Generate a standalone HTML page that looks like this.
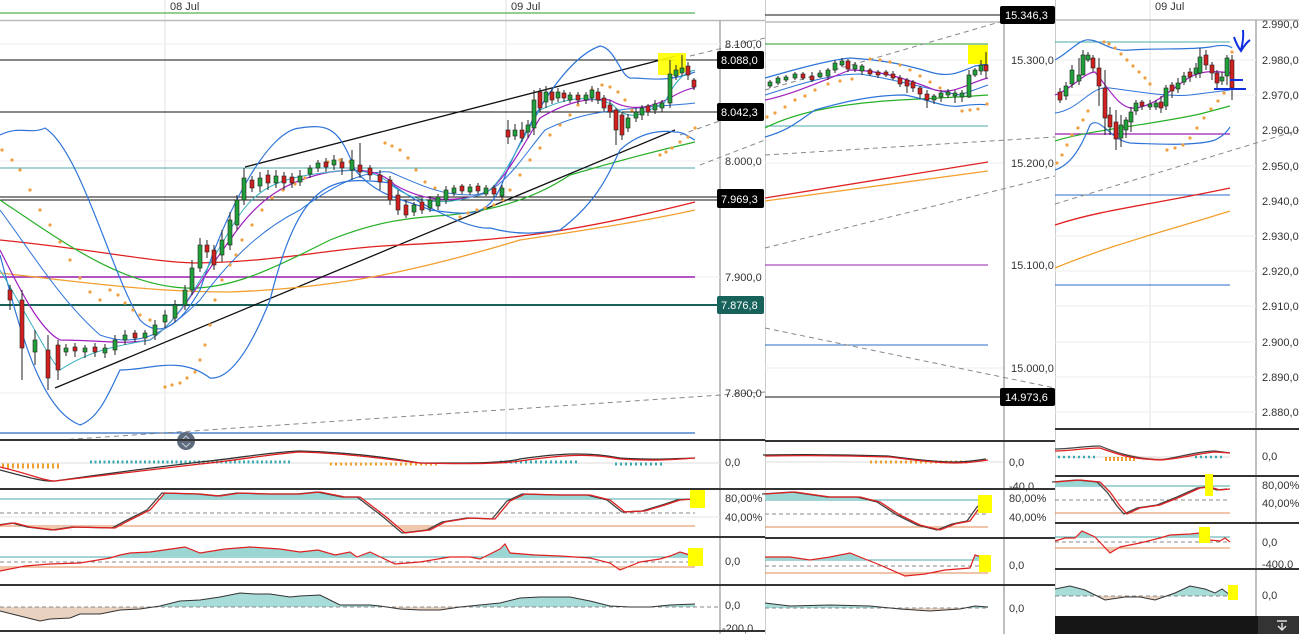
<!DOCTYPE html>
<html><head><meta charset="utf-8"><style>
html,body{margin:0;padding:0;background:#fff;width:1299px;height:634px;overflow:hidden}
svg{display:block}
text{font-family:"Liberation Sans",sans-serif;font-size:11px;fill:#333}
.b{fill:#fff;font-size:11px}
</style></head><body>
<svg width="1299" height="634" viewBox="0 0 1299 634">
<defs>
<clipPath id="c1t"><rect x="0" y="489" width="700" height="10"/></clipPath>
<clipPath id="c1b"><rect x="0" y="526" width="700" height="11"/></clipPath>
<clipPath id="c1ct"><rect x="0" y="537" width="700" height="20"/></clipPath>
<clipPath id="c1cb"><rect x="0" y="567" width="700" height="18"/></clipPath>
<clipPath id="c1mt"><rect x="0" y="585" width="700" height="22"/></clipPath>
<clipPath id="c1mb"><rect x="0" y="607" width="700" height="24"/></clipPath>
<clipPath id="c2t"><rect x="765" y="489" width="230" height="11"/></clipPath>
<clipPath id="c2b"><rect x="765" y="527" width="230" height="11"/></clipPath>
<clipPath id="c2ct"><rect x="765" y="538" width="230" height="22"/></clipPath>
<clipPath id="c2cb"><rect x="765" y="573" width="230" height="12"/></clipPath>
<clipPath id="c2mt"><rect x="765" y="585" width="230" height="23"/></clipPath>
<clipPath id="c2mb"><rect x="765" y="608" width="230" height="26"/></clipPath>
<clipPath id="c3t"><rect x="1055" y="476" width="180" height="10"/></clipPath>
<clipPath id="c3b"><rect x="1055" y="513" width="180" height="10"/></clipPath>
<clipPath id="c3ct"><rect x="1055" y="523" width="180" height="14"/></clipPath>
<clipPath id="c3cb"><rect x="1055" y="548" width="180" height="21"/></clipPath>
<clipPath id="c3mt"><rect x="1055" y="569" width="180" height="27"/></clipPath>
<clipPath id="c3mb"><rect x="1055" y="596" width="180" height="20"/></clipPath>
</defs>
<rect width="1299" height="634" fill="#fff"/>
<!-- ===== PANEL 1 ===== -->
<g>
<line x1="165" y1="0" x2="165" y2="440" stroke="#e2e2e2"/>
<line x1="506" y1="0" x2="506" y2="440" stroke="#e2e2e2"/>
<text x="170" y="10">08 Jul</text><text x="511" y="10">09 Jul</text>
<line x1="0" y1="13" x2="695" y2="13" stroke="#2a9d2a"/>
<line x1="0" y1="20.5" x2="765" y2="20.5" stroke="#bbb" stroke-width="1.5"/>
<line x1="720" y1="20" x2="720" y2="634" stroke="#aaa" stroke-width="1.5"/>
<g stroke="#eee"><line x1="0" y1="44" x2="720" y2="44"/><line x1="0" y1="161" x2="720" y2="161"/><line x1="0" y1="277" x2="720" y2="277"/><line x1="0" y1="393" x2="720" y2="393"/></g>
<line x1="0" y1="60" x2="720" y2="60" stroke="#111"/>
<line x1="0" y1="112" x2="720" y2="112" stroke="#111"/>
<line x1="0" y1="168" x2="695" y2="168" stroke="#4aa8a8"/>
<line x1="0" y1="197" x2="720" y2="197" stroke="#111"/><line x1="0" y1="200" x2="720" y2="200" stroke="#111"/>
<line x1="0" y1="277" x2="695" y2="277" stroke="#9a1fb0" stroke-width="1.5"/>
<line x1="0" y1="305" x2="720" y2="305" stroke="#17625a" stroke-width="2"/>
<line x1="0" y1="433" x2="695" y2="433" stroke="#2b6cc4" stroke-width="1.2"/>
<g stroke="#888" stroke-dasharray="5,4" fill="none"><line x1="60" y1="440" x2="765" y2="392"/><line x1="690" y1="56" x2="765" y2="38"/><line x1="680" y1="135" x2="765" y2="105"/><line x1="700" y1="165" x2="765" y2="140"/></g>
<g stroke="#111" stroke-width="1.3"><line x1="245" y1="167" x2="680" y2="55"/><line x1="55" y1="388" x2="675" y2="130"/></g>
<path d="M0,240 C100,250 150,262 195,263 C280,262 330,248 400,245 C500,240 560,236 695,202" stroke="#e02020" stroke-width="1.3" fill="none"/>
<path d="M0,273 C90,283 150,292 230,292 C340,288 420,270 520,240 C600,228 650,220 695,210" stroke="#f2a030" stroke-width="1.3" fill="none"/>
<path d="M0,200 C60,240 120,285 185,288 C230,290 270,270 330,240 C380,220 410,218 450,215 C500,210 540,195 570,175 C620,160 660,150 695,142" stroke="#27b027" stroke-width="1.2" fill="none"/>
<path d="M0,135 C20,125 30,135 45,128 C80,150 110,270 140,320 C160,340 180,325 200,290 C230,200 270,130 300,128 C330,123 340,130 355,170 C380,200 410,200 430,210 C470,215 490,220 505,176 C520,140 560,60 600,46 C615,48 620,75 630,78 C650,78 665,83 695,72" stroke="#2e74d8" stroke-width="1.2" fill="none"/>
<path d="M0,255 C20,330 40,410 80,425 C100,418 110,390 120,370 C150,370 180,355 210,378 C230,380 250,350 270,300 C300,180 330,175 390,183 C420,205 470,230 490,228 C520,236 540,233 560,230 C600,200 610,170 620,150 C640,132 660,130 675,132 C685,132 690,138 695,140" stroke="#2e74d8" stroke-width="1.2" fill="none"/>
<path d="M0,210 C30,250 60,300 100,335 C140,350 170,330 200,300 C230,260 260,230 300,210 C340,180 370,170 390,172 C420,185 440,195 470,195 C500,196 520,160 545,130 C575,115 600,112 620,110 C650,106 680,105 695,103" stroke="#2e74d8" stroke-width="1" fill="none"/>
<path d="M0,250 C20,290 40,330 60,340 C100,340 120,345 150,340 C180,320 200,280 230,240 C260,195 290,180 330,172 C360,168 380,170 395,185 C430,205 460,200 480,195 C500,190 520,150 540,118 C570,100 590,98 610,100 C630,112 650,108 670,98 C680,92 690,88 695,88" stroke="#a020c0" stroke-width="1.2" fill="none"/>
<path d="M0,270 C30,320 50,360 60,370 C90,350 120,345 150,340 C180,320 200,280 230,230 C255,185 280,178 330,172 C360,168 380,172 395,188 C430,210 460,200 480,195 C500,192 520,140 540,110 C570,96 590,96 612,104 C630,125 645,112 665,102 C675,80 685,72 695,70" stroke="#3bb0c0" stroke-width="1" fill="none"/>
<g fill="#f0a040">
<circle cx="2" cy="150" r="1.6"/><circle cx="12" cy="160" r="1.6"/><circle cx="20" cy="170" r="1.6"/><circle cx="30" cy="190" r="1.6"/><circle cx="40" cy="210" r="1.6"/><circle cx="50" cy="225" r="1.6"/><circle cx="60" cy="242" r="1.6"/><circle cx="70" cy="260" r="1.6"/><circle cx="80" cy="278" r="1.6"/><circle cx="90" cy="292" r="1.6"/><circle cx="100" cy="300" r="1.6"/><circle cx="110" cy="290" r="1.6"/><circle cx="118" cy="295" r="1.6"/><circle cx="125" cy="303" r="1.6"/><circle cx="133" cy="310" r="1.6"/><circle cx="140" cy="315" r="1.6"/><circle cx="150" cy="320" r="1.6"/><circle cx="165" cy="387" r="1.6"/><circle cx="172" cy="385" r="1.6"/><circle cx="180" cy="383" r="1.6"/><circle cx="187" cy="378" r="1.6"/><circle cx="195" cy="372" r="1.6"/><circle cx="200" cy="360" r="1.6"/><circle cx="205" cy="345" r="1.6"/><circle cx="210" cy="325" r="1.6"/><circle cx="215" cy="300" r="1.6"/><circle cx="222" cy="280" r="1.6"/><circle cx="230" cy="265" r="1.6"/><circle cx="236" cy="255" r="1.6"/><circle cx="242" cy="240" r="1.6"/><circle cx="252" cy="225" r="1.6"/><circle cx="262" cy="210" r="1.6"/><circle cx="272" cy="198" r="1.6"/><circle cx="283" cy="190" r="1.6"/><circle cx="295" cy="184" r="1.6"/><circle cx="305" cy="178" r="1.6"/><circle cx="318" cy="167" r="1.6"/><circle cx="328" cy="162" r="1.6"/><circle cx="340" cy="160" r="1.6"/><circle cx="350" cy="162" r="1.6"/><circle cx="385" cy="143" r="1.6"/><circle cx="392" cy="146" r="1.6"/><circle cx="400" cy="150" r="1.6"/><circle cx="408" cy="158" r="1.6"/><circle cx="416" cy="170" r="1.6"/><circle cx="425" cy="182" r="1.6"/><circle cx="435" cy="188" r="1.6"/><circle cx="460" cy="217" r="1.6"/><circle cx="468" cy="213" r="1.6"/><circle cx="477" cy="210" r="1.6"/><circle cx="485" cy="208" r="1.6"/><circle cx="494" cy="205" r="1.6"/><circle cx="503" cy="200" r="1.6"/><circle cx="510" cy="190" r="1.6"/><circle cx="520" cy="175" r="1.6"/><circle cx="530" cy="160" r="1.6"/><circle cx="540" cy="148" r="1.6"/><circle cx="550" cy="135" r="1.6"/><circle cx="560" cy="125" r="1.6"/><circle cx="570" cy="115" r="1.6"/><circle cx="578" cy="105" r="1.6"/><circle cx="585" cy="97" r="1.6"/><circle cx="592" cy="90" r="1.6"/><circle cx="602" cy="85" r="1.6"/><circle cx="610" cy="87" r="1.6"/><circle cx="618" cy="92" r="1.6"/><circle cx="625" cy="100" r="1.6"/><circle cx="632" cy="110" r="1.6"/><circle cx="660" cy="155" r="1.6"/><circle cx="666" cy="152" r="1.6"/><circle cx="672" cy="148" r="1.6"/><circle cx="680" cy="142" r="1.6"/><circle cx="688" cy="137" r="1.6"/><circle cx="695" cy="128" r="1.6"/>
</g>
<rect x="658" y="53" width="22" height="22" fill="#ffff00" opacity=".9"/><rect x="675" y="53" width="11" height="19" fill="#ffff00" opacity=".9"/>
<g stroke="#222" stroke-width="1">
<line x1="10" y1="285" x2="10" y2="310"/><line x1="22" y1="290" x2="22" y2="380"/><line x1="35" y1="330" x2="35" y2="365"/><line x1="48" y1="335" x2="48" y2="390"/><line x1="58" y1="340" x2="58" y2="380"/>
<line x1="66" y1="344" x2="66" y2="356"/><line x1="75" y1="343" x2="75" y2="357"/><line x1="85" y1="345" x2="85" y2="358"/><line x1="95" y1="343" x2="95" y2="357"/><line x1="105" y1="344" x2="105" y2="358"/><line x1="115" y1="335" x2="115" y2="355"/><line x1="125" y1="330" x2="125" y2="345"/><line x1="135" y1="330" x2="135" y2="342"/><line x1="145" y1="330" x2="145" y2="345"/><line x1="155" y1="320" x2="155" y2="340"/><line x1="165" y1="310" x2="165" y2="328"/><line x1="175" y1="300" x2="175" y2="322"/><line x1="185" y1="285" x2="185" y2="310"/><line x1="192" y1="260" x2="192" y2="295"/><line x1="200" y1="238" x2="200" y2="272"/><line x1="207" y1="240" x2="207" y2="258"/><line x1="214" y1="245" x2="214" y2="270"/><line x1="222" y1="230" x2="222" y2="262"/><line x1="230" y1="212" x2="230" y2="250"/><line x1="237" y1="195" x2="237" y2="230"/><line x1="244" y1="168" x2="244" y2="205"/><line x1="252" y1="176" x2="252" y2="192"/><line x1="260" y1="172" x2="260" y2="192"/><line x1="268" y1="170" x2="268" y2="190"/><line x1="276" y1="170" x2="276" y2="188"/><line x1="284" y1="172" x2="284" y2="190"/><line x1="292" y1="173" x2="292" y2="188"/><line x1="300" y1="170" x2="300" y2="186"/><line x1="310" y1="165" x2="310" y2="178"/><line x1="318" y1="160" x2="318" y2="172"/><line x1="326" y1="158" x2="326" y2="172"/><line x1="334" y1="155" x2="334" y2="170"/><line x1="342" y1="158" x2="342" y2="175"/><line x1="352" y1="150" x2="352" y2="180"/><line x1="360" y1="143" x2="360" y2="178"/><line x1="370" y1="165" x2="370" y2="180"/><line x1="380" y1="170" x2="380" y2="190"/><line x1="390" y1="176" x2="390" y2="205"/><line x1="398" y1="190" x2="398" y2="215"/><line x1="406" y1="200" x2="406" y2="218"/><line x1="414" y1="202" x2="414" y2="216"/><line x1="422" y1="198" x2="422" y2="214"/><line x1="430" y1="196" x2="430" y2="212"/><line x1="438" y1="194" x2="438" y2="210"/><line x1="446" y1="186" x2="446" y2="204"/><line x1="454" y1="185" x2="454" y2="196"/><line x1="462" y1="184" x2="462" y2="194"/><line x1="470" y1="184" x2="470" y2="195"/><line x1="478" y1="183" x2="478" y2="194"/><line x1="486" y1="185" x2="486" y2="196"/><line x1="494" y1="185" x2="494" y2="197"/><line x1="502" y1="185" x2="502" y2="200"/><line x1="508" y1="120" x2="508" y2="144"/><line x1="515" y1="124" x2="515" y2="140"/><line x1="522" y1="122" x2="522" y2="142"/><line x1="528" y1="120" x2="528" y2="138"/><line x1="534" y1="90" x2="534" y2="135"/><line x1="540" y1="88" x2="540" y2="112"/><line x1="546" y1="86" x2="546" y2="108"/><line x1="552" y1="88" x2="552" y2="104"/><line x1="558" y1="88" x2="558" y2="102"/><line x1="564" y1="90" x2="564" y2="102"/><line x1="570" y1="92" x2="570" y2="103"/><line x1="578" y1="92" x2="578" y2="104"/><line x1="586" y1="92" x2="586" y2="104"/><line x1="592" y1="86" x2="592" y2="102"/><line x1="598" y1="88" x2="598" y2="104"/><line x1="604" y1="95" x2="604" y2="112"/><line x1="610" y1="100" x2="610" y2="118"/><line x1="616" y1="108" x2="616" y2="145"/><line x1="622" y1="112" x2="622" y2="140"/><line x1="628" y1="114" x2="628" y2="132"/><line x1="636" y1="108" x2="636" y2="122"/><line x1="642" y1="105" x2="642" y2="120"/><line x1="648" y1="104" x2="648" y2="116"/><line x1="655" y1="100" x2="655" y2="114"/><line x1="662" y1="100" x2="662" y2="112"/><line x1="670" y1="60" x2="670" y2="108"/><line x1="676" y1="65" x2="676" y2="80"/><line x1="682" y1="55" x2="682" y2="76"/><line x1="688" y1="62" x2="688" y2="80"/><line x1="694" y1="78" x2="694" y2="90"/>
</g>
<g stroke="#222" stroke-width=".6">
<rect x="8" y="290" width="4" height="10" fill="#d02020"/><rect x="20" y="300" width="4" height="48" fill="#d02020"/><rect x="33" y="340" width="4" height="12" fill="#1fa03a"/><rect x="46" y="350" width="4" height="28" fill="#d02020"/><rect x="56" y="345" width="4" height="25" fill="#d02020"/>
<rect x="64" y="348" width="4" height="4" fill="#1fa03a"/><rect x="73" y="347" width="4" height="4" fill="#d02020"/><rect x="83" y="348" width="4" height="4" fill="#1fa03a"/><rect x="93" y="347" width="4" height="5" fill="#d02020"/><rect x="103" y="348" width="4" height="5" fill="#1fa03a"/><rect x="113" y="340" width="4" height="10" fill="#1fa03a"/><rect x="123" y="335" width="4" height="5" fill="#1fa03a"/><rect x="133" y="333" width="4" height="5" fill="#d02020"/><rect x="143" y="333" width="4" height="5" fill="#1fa03a"/><rect x="153" y="325" width="4" height="10" fill="#1fa03a"/><rect x="163" y="315" width="4" height="7" fill="#1fa03a"/><rect x="173" y="305" width="4" height="13" fill="#1fa03a"/><rect x="183" y="290" width="4" height="15" fill="#1fa03a"/><rect x="190" y="268" width="4" height="22" fill="#1fa03a"/><rect x="198" y="245" width="4" height="23" fill="#1fa03a"/><rect x="205" y="245" width="4" height="7" fill="#d02020"/><rect x="212" y="250" width="4" height="15" fill="#d02020"/><rect x="220" y="240" width="4" height="15" fill="#1fa03a"/><rect x="228" y="220" width="4" height="25" fill="#1fa03a"/><rect x="235" y="200" width="4" height="25" fill="#1fa03a"/><rect x="242" y="178" width="4" height="22" fill="#1fa03a"/><rect x="250" y="180" width="4" height="8" fill="#d02020"/><rect x="258" y="178" width="4" height="8" fill="#1fa03a"/><rect x="266" y="175" width="4" height="8" fill="#d02020"/><rect x="274" y="176" width="4" height="7" fill="#1fa03a"/><rect x="282" y="176" width="4" height="7" fill="#d02020"/><rect x="290" y="177" width="4" height="6" fill="#d02020"/><rect x="298" y="176" width="4" height="6" fill="#1fa03a"/><rect x="308" y="168" width="4" height="6" fill="#1fa03a"/><rect x="316" y="163" width="4" height="5" fill="#1fa03a"/><rect x="324" y="162" width="4" height="5" fill="#d02020"/><rect x="332" y="160" width="4" height="5" fill="#1fa03a"/><rect x="340" y="162" width="4" height="6" fill="#d02020"/><rect x="350" y="160" width="4" height="10" fill="#1fa03a"/><rect x="358" y="165" width="4" height="7" fill="#d02020"/><rect x="368" y="168" width="4" height="7" fill="#d02020"/><rect x="378" y="175" width="4" height="7" fill="#d02020"/><rect x="388" y="180" width="4" height="20" fill="#d02020"/><rect x="396" y="195" width="4" height="15" fill="#d02020"/><rect x="404" y="205" width="4" height="10" fill="#d02020"/><rect x="412" y="205" width="4" height="7" fill="#1fa03a"/><rect x="420" y="202" width="4" height="8" fill="#d02020"/><rect x="428" y="200" width="4" height="8" fill="#1fa03a"/><rect x="436" y="197" width="4" height="9" fill="#1fa03a"/><rect x="444" y="190" width="4" height="10" fill="#1fa03a"/><rect x="452" y="188" width="4" height="5" fill="#1fa03a"/><rect x="460" y="186" width="4" height="5" fill="#d02020"/><rect x="468" y="187" width="4" height="5" fill="#1fa03a"/><rect x="476" y="186" width="4" height="5" fill="#d02020"/><rect x="484" y="188" width="4" height="6" fill="#1fa03a"/><rect x="492" y="188" width="4" height="6" fill="#d02020"/><rect x="500" y="188" width="4" height="8" fill="#1fa03a"/><rect x="506" y="130" width="4" height="7" fill="#d02020"/><rect x="513" y="130" width="4" height="6" fill="#1fa03a"/><rect x="520" y="130" width="4" height="8" fill="#d02020"/><rect x="526" y="125" width="4" height="7" fill="#1fa03a"/><rect x="532" y="100" width="4" height="28" fill="#1fa03a"/><rect x="538" y="92" width="4" height="16" fill="#d02020"/><rect x="544" y="92" width="4" height="10" fill="#1fa03a"/><rect x="550" y="92" width="4" height="8" fill="#d02020"/><rect x="556" y="92" width="4" height="6" fill="#1fa03a"/><rect x="562" y="93" width="4" height="5" fill="#d02020"/><rect x="568" y="95" width="4" height="5" fill="#1fa03a"/><rect x="576" y="95" width="4" height="5" fill="#d02020"/><rect x="584" y="95" width="4" height="5" fill="#1fa03a"/><rect x="590" y="90" width="4" height="8" fill="#1fa03a"/><rect x="596" y="92" width="4" height="8" fill="#d02020"/><rect x="602" y="98" width="4" height="10" fill="#d02020"/><rect x="608" y="105" width="4" height="7" fill="#d02020"/><rect x="614" y="110" width="4" height="20" fill="#d02020"/><rect x="620" y="115" width="4" height="20" fill="#d02020"/><rect x="626" y="118" width="4" height="10" fill="#1fa03a"/><rect x="634" y="112" width="4" height="6" fill="#1fa03a"/><rect x="640" y="108" width="4" height="7" fill="#1fa03a"/><rect x="646" y="106" width="4" height="6" fill="#d02020"/><rect x="653" y="104" width="4" height="6" fill="#1fa03a"/><rect x="660" y="103" width="4" height="5" fill="#1fa03a"/><rect x="668" y="74" width="4" height="29" fill="#1fa03a"/><rect x="674" y="70" width="4" height="6" fill="#1fa03a"/><rect x="680" y="68" width="4" height="5" fill="#1fa03a"/><rect x="686" y="66" width="4" height="9" fill="#d02020"/><rect x="692" y="80" width="4" height="7" fill="#d02020"/>
</g>
<text x="725" y="48">8.100,0</text><text x="725" y="165">8.000,0</text><text x="725" y="281">7.900,0</text><text x="725" y="397">7.800,0</text>
<rect x="717" y="51" width="47" height="18" rx="2" fill="#000"/><text class="b" x="721" y="64">8.088,0</text>
<rect x="717" y="103" width="47" height="18" rx="2" fill="#000"/><text class="b" x="721" y="116">8.042,3</text>
<rect x="717" y="189" width="47" height="19" rx="2" fill="#000"/><text class="b" x="721" y="203">7.969,3</text>
<rect x="717" y="296" width="47" height="18" rx="2" fill="#17625a"/><text class="b" x="721" y="309">7.876,8</text>
<circle cx="186" cy="441" r="9" fill="#5d6b7d"/><path d="M182,440 l4,-4 l4,4 M182,443 l4,4 l4,-4" stroke="#c8d0da" fill="none"/>
<g stroke="#333" stroke-width="2"><line x1="0" y1="440" x2="765" y2="440"/><line x1="0" y1="489" x2="765" y2="489"/><line x1="0" y1="537" x2="765" y2="537"/><line x1="0" y1="585" x2="765" y2="585"/><line x1="0" y1="631" x2="765" y2="631"/></g>
<!-- MACD -->
<line x1="0" y1="463" x2="720" y2="463" stroke="#ddd"/>
<path d="M2,466 h60" stroke="#f0a030" stroke-width="5" stroke-dasharray="2,3"/>
<path d="M90,462 h200" stroke="#3aa8b0" stroke-width="3" stroke-dasharray="2,2.5"/>
<path d="M330,464 h110" stroke="#f0a030" stroke-width="3" stroke-dasharray="2,3"/>
<path d="M500,462 h80 M615,464 h50" stroke="#3aa8b0" stroke-width="3" stroke-dasharray="2,3"/>
<path d="M0,470 C30,478 45,482 55,481 C90,476 150,468 200,462 C240,458 270,452 300,451 C340,452 380,456 420,463 C460,463 500,464 520,459 C560,453 590,452 620,458 C650,460 670,459 695,458" stroke="#333" stroke-width="1.3" fill="none"/>
<path d="M0,467 C30,474 45,481 55,481 C90,477 150,470 200,464 C240,460 270,454 300,452 C340,453 380,458 420,463 C460,464 500,464 520,461 C560,455 590,453 620,459 C650,461 670,460 695,458" stroke="#e02020" stroke-width="1.3" fill="none"/>
<text x="725" y="466">0,0</text>
<!-- Stoch -->
<line x1="0" y1="499" x2="695" y2="499" stroke="#4aa8a8"/><line x1="0" y1="513" x2="695" y2="513" stroke="#888" stroke-dasharray="4,3"/><line x1="0" y1="526" x2="695" y2="526" stroke="#e08850"/><line x1="0" y1="517" x2="720" y2="517" stroke="#e5e5e5"/>
<g>
<path clip-path="url(#c1t)" fill="#9ad6d4" d="M0,525 L15,523 L30,527 L55,530 L75,527 L115,528 L130,520 L150,510 L165,493 L200,494 L220,496 L240,493 L270,494 L300,494 L320,492 L345,497 L360,497 L385,516 L405,533 L430,530 L445,522 L470,518 L495,519 L510,501 L525,494 L560,495 L590,495 L610,500 L625,512 L645,511 L665,505 L680,500 L695,499 L695,499 L0,499Z"/>
<path clip-path="url(#c1b)" fill="#f0c8b0" d="M0,525 L15,523 L30,527 L55,530 L75,527 L115,528 L130,520 L150,510 L165,493 L200,494 L220,496 L240,493 L270,494 L300,494 L320,492 L345,497 L360,497 L385,516 L405,533 L430,530 L445,522 L470,518 L495,519 L510,501 L525,494 L560,495 L590,495 L610,500 L625,512 L645,511 L665,505 L680,500 L695,499 L695,526 L0,526Z"/>
<path transform="translate(-3,0)" fill="none" stroke="#444" stroke-width="1.3" d="M0,525 L15,523 L30,527 L55,530 L75,527 L115,528 L130,520 L150,510 L165,493 L200,494 L220,496 L240,493 L270,494 L300,494 L320,492 L345,497 L360,497 L385,516 L405,533 L430,530 L445,522 L470,518 L495,519 L510,501 L525,494 L560,495 L590,495 L610,500 L625,512 L645,511 L665,505 L680,500 L695,499"/>
<path fill="none" stroke="#e02020" stroke-width="1.3" d="M0,525 L15,523 L30,527 L55,530 L75,527 L115,528 L130,520 L150,510 L165,493 L200,494 L220,496 L240,493 L270,494 L300,494 L320,492 L345,497 L360,497 L385,516 L405,533 L430,530 L445,522 L470,518 L495,519 L510,501 L525,494 L560,495 L590,495 L610,500 L625,512 L645,511 L665,505 L680,500 L695,499"/>
</g>
<text x="725" y="502">80,00%</text><text x="725" y="521">40,00%</text>
<rect x="690" y="490" width="15" height="18" fill="#ffff00"/>
<!-- CCI -->
<line x1="0" y1="557" x2="695" y2="557" stroke="#4aa8a8"/><line x1="0" y1="562" x2="695" y2="562" stroke="#888" stroke-dasharray="4,3"/><line x1="0" y1="567" x2="695" y2="567" stroke="#e08850"/>
<path clip-path="url(#c1ct)" fill="#9ad6d4" d="M0,571 L25,566 L50,564 L80,563 L110,558 L120,555 L130,553 L150,552 L185,547 L200,553 L225,549 L250,547 L280,549 L300,552 L318,550 L335,555 L350,552 L357,557 L370,552 L395,564 L420,562 L450,557 L470,557 L480,559 L500,549 L505,544 L510,553 L535,555 L560,556 L590,558 L610,563 L620,570 L640,562 L660,559 L670,556 L680,552 L690,555 L695,557 L0,557Z"/>
<path clip-path="url(#c1cb)" fill="#f0c8b0" d="M0,571 L25,566 L50,564 L80,563 L110,558 L120,555 L130,553 L150,552 L185,547 L200,553 L225,549 L250,547 L280,549 L300,552 L318,550 L335,555 L350,552 L357,557 L370,552 L395,564 L420,562 L450,557 L470,557 L480,559 L500,549 L505,544 L510,553 L535,555 L560,556 L590,558 L610,563 L620,570 L640,562 L660,559 L670,556 L680,552 L690,555 L695,557 L695,567 L0,567Z"/>
<path fill="none" stroke="#e02020" stroke-width="1.2" d="M0,571 L25,566 L50,564 L80,563 L110,558 L120,555 L130,553 L150,552 L185,547 L200,553 L225,549 L250,547 L280,549 L300,552 L318,550 L335,555 L350,552 L357,557 L370,552 L395,564 L420,562 L450,557 L470,557 L480,559 L500,549 L505,544 L510,553 L535,555 L560,556 L590,558 L610,563 L620,570 L640,562 L660,559 L670,556 L680,552 L690,555 L695,557"/>
<text x="725" y="565">0,0</text>
<rect x="688" y="548" width="15" height="18" fill="#ffff00"/>
<!-- Momentum -->
<path clip-path="url(#c1mt)" fill="#a8dcd8" d="M0,611 L20,616 L40,621 L50,619 L70,618 L80,614 L100,614 L120,610 L140,609 L160,606 L180,601 L200,600 L220,597 L240,593 L255,594 L270,594 L290,597 L300,596 L320,595 L340,605 L370,605 L380,606 L400,609 L420,610 L440,610 L460,607 L480,605 L500,603 L520,598 L540,597 L570,597 L590,601 L610,606 L630,607 L650,607 L670,605 L695,604 L695,607 L0,607Z"/>
<path clip-path="url(#c1mb)" fill="#ead2c0" d="M0,611 L20,616 L40,621 L50,619 L70,618 L80,614 L100,614 L120,610 L140,609 L160,606 L180,601 L200,600 L220,597 L240,593 L255,594 L270,594 L290,597 L300,596 L320,595 L340,605 L370,605 L380,606 L400,609 L420,610 L440,610 L460,607 L480,605 L500,603 L520,598 L540,597 L570,597 L590,601 L610,606 L630,607 L650,607 L670,605 L695,604 L695,607 L0,607Z"/>
<line x1="0" y1="607" x2="720" y2="607" stroke="#888" stroke-dasharray="4,3"/>
<path fill="none" stroke="#333" d="M0,611 L20,616 L40,621 L50,619 L70,618 L80,614 L100,614 L120,610 L140,609 L160,606 L180,601 L200,600 L220,597 L240,593 L255,594 L270,594 L290,597 L300,596 L320,595 L340,605 L370,605 L380,606 L400,609 L420,610 L440,610 L460,607 L480,605 L500,603 L520,598 L540,597 L570,597 L590,601 L610,606 L630,607 L650,607 L670,605 L695,604"/>
<text x="725" y="609">0,0</text><text x="722" y="632">-200,0</text>
</g>
<!-- ===== PANEL 2 ===== -->
<g>
<rect x="765" y="0" width="290" height="634" fill="#fff"/>
<line x1="765.5" y1="0" x2="765.5" y2="634" stroke="#ccc"/>
<line x1="1004" y1="20" x2="1004" y2="634" stroke="#aaa" stroke-width="1.5"/>
<line x1="765" y1="15" x2="1003" y2="15" stroke="#111"/>
<line x1="765" y1="22" x2="1003" y2="22" stroke="#bbb" stroke-width="1.5"/>
<g stroke="#eee"><line x1="765" y1="60" x2="1003" y2="60"/><line x1="765" y1="163" x2="1003" y2="163"/><line x1="765" y1="368" x2="1003" y2="368"/></g>
<line x1="765" y1="44" x2="988" y2="44" stroke="#2a9d2a"/>
<line x1="765" y1="126" x2="988" y2="126" stroke="#4aa8a8"/>
<line x1="765" y1="265" x2="988" y2="265" stroke="#9a1fb0"/>
<line x1="765" y1="345" x2="988" y2="345" stroke="#2b6cc4"/>
<line x1="765" y1="397" x2="1003" y2="397" stroke="#111"/>
<g stroke="#888" stroke-dasharray="5,4"><line x1="765" y1="90" x2="1003" y2="21"/><line x1="765" y1="155" x2="1055" y2="137"/><line x1="765" y1="248" x2="1055" y2="176"/><line x1="765" y1="328" x2="1055" y2="388"/></g>
<line x1="765" y1="198" x2="988" y2="162" stroke="#e02020" stroke-width="1.3"/>
<line x1="765" y1="201" x2="988" y2="171" stroke="#f2a030" stroke-width="1.3"/>
<path d="M765,128 C800,110 850,103 900,100 C940,98 960,97 988,95" stroke="#27b027" stroke-width="1.2" fill="none"/>
<path d="M765,78 C800,68 830,60 850,58 C880,60 900,63 930,72 C950,78 960,72 975,66 L988,64" stroke="#2e74d8" stroke-width="1.2" fill="none"/>
<path d="M765,137 C790,130 800,120 815,110 C840,103 870,95 905,95 C930,100 945,108 960,106 C975,104 982,104 988,105" stroke="#2e74d8" stroke-width="1.2" fill="none"/>
<path d="M765,95 C800,84 830,74 860,74 C900,80 930,90 960,95 L988,85" stroke="#2e74d8" stroke-width="1" fill="none"/>
<path d="M765,100 C790,95 820,82 850,70 C880,70 910,80 935,90 C955,95 970,82 988,78" stroke="#a020c0" stroke-width="1.2" fill="none"/>
<g fill="#f0a040"><circle cx="767" cy="117" r="1.6"/><circle cx="775" cy="113" r="1.6"/><circle cx="785" cy="107" r="1.6"/><circle cx="795" cy="100" r="1.6"/><circle cx="805" cy="96" r="1.6"/><circle cx="815" cy="90" r="1.6"/><circle cx="828" cy="84" r="1.6"/><circle cx="840" cy="81" r="1.6"/><circle cx="852" cy="79" r="1.6"/><circle cx="870" cy="59" r="1.6"/><circle cx="880" cy="60" r="1.6"/><circle cx="890" cy="62" r="1.6"/><circle cx="900" cy="65" r="1.6"/><circle cx="910" cy="70" r="1.6"/><circle cx="920" cy="76" r="1.6"/><circle cx="930" cy="82" r="1.6"/><circle cx="940" cy="88" r="1.6"/><circle cx="948" cy="93" r="1.6"/><circle cx="962" cy="111" r="1.6"/><circle cx="970" cy="110" r="1.6"/><circle cx="978" cy="109" r="1.6"/><circle cx="987" cy="104" r="1.6"/></g>
<rect x="968" y="45" width="20" height="19" fill="#ffff00"/>
<g stroke="#222"><line x1="770" y1="80" x2="770" y2="88"/><line x1="778" y1="76" x2="778" y2="85"/><line x1="786" y1="75" x2="786" y2="82"/><line x1="795" y1="72" x2="795" y2="80"/><line x1="803" y1="72" x2="803" y2="80"/><line x1="812" y1="72" x2="812" y2="82"/><line x1="820" y1="70" x2="820" y2="78"/><line x1="828" y1="68" x2="828" y2="80"/><line x1="835" y1="60" x2="835" y2="73"/><line x1="842" y1="58" x2="842" y2="67"/><line x1="848" y1="59" x2="848" y2="72"/><line x1="855" y1="62" x2="855" y2="72"/><line x1="862" y1="64" x2="862" y2="75"/><line x1="870" y1="68" x2="870" y2="76"/><line x1="878" y1="70" x2="878" y2="78"/><line x1="886" y1="70" x2="886" y2="77"/><line x1="893" y1="71" x2="893" y2="80"/><line x1="900" y1="75" x2="900" y2="87"/><line x1="907" y1="78" x2="907" y2="93"/><line x1="913" y1="80" x2="913" y2="92"/><line x1="920" y1="86" x2="920" y2="99"/><line x1="927" y1="90" x2="927" y2="108"/><line x1="934" y1="94" x2="934" y2="104"/><line x1="941" y1="90" x2="941" y2="102"/><line x1="948" y1="89" x2="948" y2="98"/><line x1="955" y1="90" x2="955" y2="103"/><line x1="962" y1="90" x2="962" y2="102"/><line x1="969" y1="70" x2="969" y2="98"/><line x1="975" y1="68" x2="975" y2="77"/><line x1="981" y1="60" x2="981" y2="75"/><line x1="986" y1="52" x2="986" y2="78"/></g>
<g stroke="#222" stroke-width=".6"><rect x="768" y="82" width="4" height="4" fill="#1fa03a"/><rect x="776" y="78" width="4" height="5" fill="#1fa03a"/><rect x="784" y="77" width="4" height="3" fill="#1fa03a"/><rect x="793" y="74" width="4" height="4" fill="#1fa03a"/><rect x="801" y="74" width="4" height="4" fill="#d02020"/><rect x="810" y="76" width="4" height="4" fill="#d02020"/><rect x="818" y="73" width="4" height="4" fill="#1fa03a"/><rect x="826" y="70" width="4" height="6" fill="#1fa03a"/><rect x="833" y="63" width="4" height="7" fill="#1fa03a"/><rect x="840" y="61" width="4" height="4" fill="#1fa03a"/><rect x="846" y="61" width="4" height="8" fill="#d02020"/><rect x="853" y="65" width="4" height="4" fill="#1fa03a"/><rect x="860" y="66" width="4" height="5" fill="#1fa03a"/><rect x="868" y="70" width="4" height="4" fill="#d02020"/><rect x="876" y="72" width="4" height="3" fill="#d02020"/><rect x="884" y="72" width="4" height="3" fill="#d02020"/><rect x="891" y="74" width="4" height="4" fill="#d02020"/><rect x="898" y="78" width="4" height="6" fill="#d02020"/><rect x="905" y="80" width="4" height="6" fill="#d02020"/><rect x="911" y="82" width="4" height="6" fill="#d02020"/><rect x="918" y="88" width="4" height="6" fill="#d02020"/><rect x="925" y="94" width="4" height="6" fill="#d02020"/><rect x="932" y="96" width="4" height="4" fill="#1fa03a"/><rect x="939" y="93" width="4" height="4" fill="#1fa03a"/><rect x="946" y="92" width="4" height="3" fill="#1fa03a"/><rect x="953" y="93" width="4" height="3" fill="#1fa03a"/><rect x="960" y="93" width="4" height="4" fill="#1fa03a"/><rect x="967" y="75" width="4" height="22" fill="#1fa03a"/><rect x="973" y="70" width="4" height="5" fill="#1fa03a"/><rect x="979" y="65" width="4" height="6" fill="#1fa03a"/><rect x="984" y="65" width="4" height="6" fill="#d02020"/></g>
<text x="1011" y="64">15.300,0</text><text x="1011" y="167">15.200,0</text><text x="1011" y="269">15.100,0</text><text x="1011" y="372">15.000,0</text>
<rect x="1000" y="6" width="55" height="18" rx="2" fill="#000"/><text class="b" x="1005" y="19">15.346,3</text>
<rect x="1000" y="388" width="55" height="18" rx="2" fill="#000"/><text class="b" x="1005" y="401">14.973,6</text>
<g stroke="#333" stroke-width="2"><line x1="765" y1="441" x2="1055" y2="441"/><line x1="765" y1="489" x2="1055" y2="489"/><line x1="765" y1="538" x2="1055" y2="538"/><line x1="765" y1="585" x2="1055" y2="585"/></g>
<line x1="765" y1="462" x2="1003" y2="462" stroke="#ddd"/>
<path d="M870,462 h100" stroke="#f0a030" stroke-width="3" stroke-dasharray="2,3"/>
<path d="M765,456 C820,455 860,456 890,457 C920,461 940,463 955,463 C970,463 980,461 988,460" stroke="#333" stroke-width="1.3" fill="none" transform="translate(-2,-1)"/>
<path d="M765,456 C820,455 860,456 890,457 C920,461 940,463 955,463 C970,463 980,461 988,460" stroke="#e02020" stroke-width="1.3" fill="none"/>
<text x="1009" y="466">0,0</text><text x="1009" y="490">-40,0</text>
<line x1="765" y1="500" x2="988" y2="500" stroke="#4aa8a8"/><line x1="765" y1="514" x2="988" y2="514" stroke="#888" stroke-dasharray="4,3"/><line x1="765" y1="527" x2="988" y2="527" stroke="#e08850"/>
<path clip-path="url(#c2t)" fill="#9ad6d4" d="M765,494 L795,492 L830,497 L860,497 L880,502 L900,515 L920,525 L940,530 L955,524 L970,521 L980,507 L988,501 L988,500 L765,500Z"/>
<path clip-path="url(#c2b)" fill="#f0c8b0" d="M765,494 L795,492 L830,497 L860,497 L880,502 L900,515 L920,525 L940,530 L955,524 L970,521 L980,507 L988,501 L988,527 L765,527Z"/>
<path fill="none" stroke="#444" stroke-width="1.3" transform="translate(-3,0)" d="M765,494 L795,492 L830,497 L860,497 L880,502 L900,515 L920,525 L940,530 L955,524 L970,521 L980,507 L988,501"/>
<path fill="none" stroke="#e02020" stroke-width="1.3" d="M765,494 L795,492 L830,497 L860,497 L880,502 L900,515 L920,525 L940,530 L955,524 L970,521 L980,507 L988,501"/>
<rect x="978" y="495" width="14" height="18" fill="#ffff00"/>
<text x="1009" y="502">80,00%</text><text x="1009" y="521">40,00%</text>
<line x1="765" y1="560" x2="988" y2="560" stroke="#4aa8a8"/><line x1="765" y1="566" x2="988" y2="566" stroke="#888" stroke-dasharray="4,3"/><line x1="765" y1="573" x2="988" y2="573" stroke="#e08850"/>
<path clip-path="url(#c2ct)" fill="#9ad6d4" d="M765,557 L790,557 L810,560 L830,557 L850,553 L860,557 L880,565 L905,576 L925,574 L945,570 L970,568 L975,555 L988,559 L988,560 L765,560Z"/>
<path clip-path="url(#c2cb)" fill="#f0c8b0" d="M765,557 L790,557 L810,560 L830,557 L850,553 L860,557 L880,565 L905,576 L925,574 L945,570 L970,568 L975,555 L988,559 L988,573 L765,573Z"/>
<path fill="none" stroke="#e02020" stroke-width="1.2" d="M765,557 L790,557 L810,560 L830,557 L850,553 L860,557 L880,565 L905,576 L925,574 L945,570 L970,568 L975,555 L988,559"/>
<rect x="979" y="555" width="12" height="17" fill="#ffff00"/>
<text x="1009" y="569">0,0</text>
<path clip-path="url(#c2mt)" fill="#a8dcd8" d="M765,603 L790,606 L830,605 L870,606 L900,609 L930,611 L960,609 L975,606 L988,607 L988,608 L765,608Z"/>
<path clip-path="url(#c2mb)" fill="#ead2c0" d="M765,603 L790,606 L830,605 L870,606 L900,609 L930,611 L960,609 L975,606 L988,607 L988,608 L765,608Z"/>
<line x1="765" y1="608" x2="988" y2="608" stroke="#888" stroke-dasharray="4,3"/>
<path fill="none" stroke="#333" d="M765,603 L790,606 L830,605 L870,606 L900,609 L930,611 L960,609 L975,606 L988,607"/>
<text x="1009" y="612">0,0</text>
</g>
<!-- ===== PANEL 3 ===== -->
<g>
<rect x="1055" y="0" width="244" height="634" fill="#fff"/>
<line x1="1055.5" y1="0" x2="1055.5" y2="634" stroke="#ccc"/>
<line x1="1150" y1="0" x2="1150" y2="428" stroke="#e2e2e2"/>
<text x="1155" y="10">09 Jul</text>
<line x1="1055" y1="20" x2="1299" y2="20" stroke="#bbb" stroke-width="1.5"/>
<line x1="1256" y1="20" x2="1256" y2="616" stroke="#aaa" stroke-width="1.5"/>
<g stroke="#eee"><line x1="1055" y1="60" x2="1256" y2="60"/><line x1="1055" y1="95" x2="1256" y2="95"/><line x1="1055" y1="166" x2="1256" y2="166"/><line x1="1055" y1="236" x2="1256" y2="236"/><line x1="1055" y1="271" x2="1256" y2="271"/><line x1="1055" y1="306" x2="1256" y2="306"/><line x1="1055" y1="342" x2="1256" y2="342"/><line x1="1055" y1="377" x2="1256" y2="377"/><line x1="1055" y1="412" x2="1256" y2="412"/></g>
<line x1="1055" y1="42" x2="1230" y2="42" stroke="#4aa8a8"/>
<line x1="1055" y1="134" x2="1230" y2="134" stroke="#9a1fb0" stroke-width="1.3"/>
<line x1="1055" y1="195" x2="1230" y2="195" stroke="#2b6cc4"/>
<line x1="1055" y1="285" x2="1230" y2="285" stroke="#2b6cc4"/>
<line x1="1055" y1="204" x2="1299" y2="130" stroke="#888" stroke-dasharray="5,4"/>
<path d="M1055,225 C1100,210 1150,205 1230,188" stroke="#e02020" stroke-width="1.3" fill="none"/>
<path d="M1055,268 C1110,245 1170,230 1230,211" stroke="#f2a030" stroke-width="1.3" fill="none"/>
<path d="M1055,141 C1090,130 1150,125 1200,114 L1230,106" stroke="#27b027" stroke-width="1.2" fill="none"/>
<path d="M1055,60 C1070,52 1080,38 1090,40 C1100,40 1110,52 1130,50 C1160,48 1190,50 1210,47 C1225,44 1230,46 1232,48" stroke="#2e74d8" stroke-width="1.2" fill="none"/>
<path d="M1055,170 C1070,165 1080,150 1090,125 C1100,115 1110,140 1130,143 C1170,145 1200,145 1215,140 C1225,135 1228,130 1230,127" stroke="#2e74d8" stroke-width="1.2" fill="none"/>
<path d="M1055,113 C1080,110 1090,85 1110,88 C1140,92 1170,97 1190,95 L1230,90" stroke="#2e74d8" stroke-width="1" fill="none"/>
<path d="M1055,95 C1070,90 1085,72 1095,72 C1110,90 1120,110 1135,108 C1155,106 1170,90 1190,77 C1200,72 1210,70 1230,73" stroke="#a020c0" stroke-width="1.2" fill="none"/>
<g fill="#f0a040"><circle cx="1057" cy="163" r="1.6"/><circle cx="1062" cy="155" r="1.6"/><circle cx="1067" cy="145" r="1.6"/><circle cx="1072" cy="135" r="1.6"/><circle cx="1078" cy="128" r="1.6"/><circle cx="1083" cy="120" r="1.6"/><circle cx="1088" cy="111" r="1.6"/><circle cx="1104" cy="42" r="1.6"/><circle cx="1109" cy="44" r="1.6"/><circle cx="1115" cy="48" r="1.6"/><circle cx="1121" cy="54" r="1.6"/><circle cx="1127" cy="60" r="1.6"/><circle cx="1133" cy="66" r="1.6"/><circle cx="1139" cy="72" r="1.6"/><circle cx="1145" cy="78" r="1.6"/><circle cx="1150" cy="84" r="1.6"/><circle cx="1167" cy="150" r="1.6"/><circle cx="1175" cy="148" r="1.6"/><circle cx="1183" cy="145" r="1.6"/><circle cx="1190" cy="138" r="1.6"/><circle cx="1197" cy="128" r="1.6"/><circle cx="1204" cy="118" r="1.6"/><circle cx="1211" cy="109" r="1.6"/><circle cx="1218" cy="101" r="1.6"/><circle cx="1224" cy="93" r="1.6"/><circle cx="1232" cy="52" r="1.6"/></g>
<g stroke="#222"><line x1="1060" y1="88" x2="1060" y2="103"/><line x1="1066" y1="82" x2="1066" y2="100"/><line x1="1072" y1="65" x2="1072" y2="88"/><line x1="1079" y1="58" x2="1079" y2="85"/><line x1="1083" y1="50" x2="1083" y2="66"/><line x1="1088" y1="52" x2="1088" y2="62"/><line x1="1093" y1="55" x2="1093" y2="72"/><line x1="1099" y1="58" x2="1099" y2="106"/><line x1="1105" y1="70" x2="1105" y2="135"/><line x1="1110" y1="107" x2="1110" y2="135"/><line x1="1116" y1="110" x2="1116" y2="150"/><line x1="1121" y1="115" x2="1121" y2="147"/><line x1="1126" y1="117" x2="1126" y2="138"/><line x1="1131" y1="107" x2="1131" y2="132"/><line x1="1136" y1="100" x2="1136" y2="115"/><line x1="1142" y1="100" x2="1142" y2="110"/><line x1="1150" y1="100" x2="1150" y2="110"/><line x1="1156" y1="100" x2="1156" y2="110"/><line x1="1161" y1="96" x2="1161" y2="113"/><line x1="1166" y1="85" x2="1166" y2="110"/><line x1="1172" y1="82" x2="1172" y2="98"/><line x1="1178" y1="78" x2="1178" y2="93"/><line x1="1184" y1="72" x2="1184" y2="85"/><line x1="1190" y1="68" x2="1190" y2="82"/><line x1="1196" y1="63" x2="1196" y2="78"/><line x1="1200" y1="48" x2="1200" y2="78"/><line x1="1206" y1="50" x2="1206" y2="70"/><line x1="1212" y1="62" x2="1212" y2="80"/><line x1="1217" y1="70" x2="1217" y2="90"/><line x1="1222" y1="72" x2="1222" y2="85"/><line x1="1227" y1="55" x2="1227" y2="85"/><line x1="1232" y1="55" x2="1232" y2="100"/></g>
<g stroke="#222" stroke-width=".6"><rect x="1058" y="92" width="4" height="8" fill="#d02020"/><rect x="1064" y="86" width="4" height="10" fill="#1fa03a"/><rect x="1070" y="70" width="4" height="14" fill="#1fa03a"/><rect x="1077" y="75" width="4" height="6" fill="#1fa03a"/><rect x="1081" y="55" width="4" height="20" fill="#1fa03a"/><rect x="1086" y="55" width="4" height="5" fill="#1fa03a"/><rect x="1091" y="58" width="4" height="10" fill="#d02020"/><rect x="1097" y="68" width="4" height="18" fill="#d02020"/><rect x="1103" y="88" width="4" height="30" fill="#d02020"/><rect x="1108" y="115" width="4" height="12" fill="#d02020"/><rect x="1114" y="122" width="4" height="17" fill="#d02020"/><rect x="1119" y="125" width="4" height="13" fill="#1fa03a"/><rect x="1124" y="120" width="4" height="10" fill="#1fa03a"/><rect x="1129" y="112" width="4" height="10" fill="#1fa03a"/><rect x="1134" y="103" width="4" height="8" fill="#1fa03a"/><rect x="1140" y="102" width="4" height="4" fill="#d02020"/><rect x="1148" y="104" width="4" height="3" fill="#1fa03a"/><rect x="1154" y="103" width="4" height="4" fill="#1fa03a"/><rect x="1159" y="102" width="4" height="6" fill="#d02020"/><rect x="1164" y="88" width="4" height="18" fill="#1fa03a"/><rect x="1170" y="85" width="4" height="6" fill="#d02020"/><rect x="1176" y="83" width="4" height="6" fill="#1fa03a"/><rect x="1182" y="76" width="4" height="6" fill="#1fa03a"/><rect x="1188" y="72" width="4" height="5" fill="#d02020"/><rect x="1194" y="68" width="4" height="6" fill="#1fa03a"/><rect x="1198" y="57" width="4" height="16" fill="#1fa03a"/><rect x="1204" y="55" width="4" height="10" fill="#d02020"/><rect x="1210" y="65" width="4" height="8" fill="#d02020"/><rect x="1215" y="73" width="4" height="10" fill="#d02020"/><rect x="1220" y="77" width="4" height="4" fill="#1fa03a"/><rect x="1225" y="58" width="4" height="18" fill="#1fa03a"/><rect x="1230" y="60" width="4" height="28" fill="#d02020"/></g>
<g stroke="#1030e0" stroke-width="2" fill="none"><line x1="1214" y1="89" x2="1246" y2="89"/><line x1="1230" y1="80" x2="1243" y2="80"/><path d="M1243,30 C1244,40 1242,45 1241,50 M1234,37 C1236,43 1238,47 1241,51 C1244,46 1247,42 1250,40"/></g>
<text x="1262" y="28">2.990,0</text><text x="1262" y="64">2.980,0</text><text x="1262" y="99">2.970,0</text><text x="1262" y="134">2.960,0</text><text x="1262" y="170">2.950,0</text><text x="1262" y="205">2.940,0</text><text x="1262" y="240">2.930,0</text><text x="1262" y="275">2.920,0</text><text x="1262" y="310">2.910,0</text><text x="1262" y="346">2.900,0</text><text x="1262" y="381">2.890,0</text><text x="1262" y="416">2.880,0</text>
<g stroke="#333" stroke-width="2"><line x1="1055" y1="429" x2="1299" y2="429"/><line x1="1055" y1="476" x2="1299" y2="476"/><line x1="1055" y1="523" x2="1299" y2="523"/><line x1="1055" y1="569" x2="1299" y2="569"/></g>
<line x1="1055" y1="457" x2="1230" y2="457" stroke="#ddd"/>
<path d="M1058,457 h40 M1195,457 h30" stroke="#3aa8b0" stroke-width="2.5" stroke-dasharray="2,3"/>
<path d="M1105,459 h30" stroke="#f0a030" stroke-width="4" stroke-dasharray="2,2"/>
<path d="M1055,451 C1070,451 1085,448 1100,448 C1120,455 1130,459 1160,460 C1180,459 1200,453 1215,452 L1230,453 L1230,452 C1210,451 1190,452 1170,458 C1140,459 1120,452 1100,448 C1080,449 1070,451 1055,451Z" fill="#f6c8c0"/>
<path d="M1055,449 C1070,449 1085,446 1100,446 C1115,452 1130,458 1160,460 C1180,457 1200,451 1215,451 L1230,453" stroke="#444" stroke-width="1.2" fill="none"/>
<path d="M1055,451 C1070,451 1085,448 1100,448 C1120,455 1130,459 1160,460 C1180,459 1200,453 1215,452 L1230,453" stroke="#e02020" stroke-width="1.3" fill="none"/>
<text x="1262" y="460">0,0</text>
<line x1="1055" y1="486" x2="1230" y2="486" stroke="#4aa8a8"/><line x1="1055" y1="500" x2="1230" y2="500" stroke="#888" stroke-dasharray="4,3"/><line x1="1055" y1="513" x2="1230" y2="513" stroke="#e08850"/>
<path clip-path="url(#c3t)" fill="#9ad6d4" d="M1055,482 L1080,480 L1100,482 L1110,492 L1120,506 L1127,514 L1140,508 L1160,505 L1180,497 L1200,488 L1210,487 L1220,490 L1230,489 L1230,486 L1055,486Z"/>
<path fill="none" stroke="#444" stroke-width="1.3" transform="translate(-3,0)" d="M1055,482 L1080,480 L1100,482 L1110,492 L1120,506 L1127,514 L1140,508 L1160,505 L1180,497 L1200,488 L1210,487 L1220,490 L1230,489"/>
<path fill="none" stroke="#e02020" stroke-width="1.3" d="M1055,482 L1080,480 L1100,482 L1110,492 L1120,506 L1127,514 L1140,508 L1160,505 L1180,497 L1200,488 L1210,487 L1220,490 L1230,489"/>
<rect x="1205" y="474" width="8" height="22" fill="#ffff00"/>
<text x="1262" y="489">80,00%</text><text x="1262" y="507">40,00%</text>
<line x1="1055" y1="537" x2="1230" y2="537" stroke="#4aa8a8"/><line x1="1055" y1="542" x2="1230" y2="542" stroke="#888" stroke-dasharray="4,3"/><line x1="1055" y1="548" x2="1230" y2="548" stroke="#e08850"/>
<path clip-path="url(#c3ct)" fill="#9ad6d4" d="M1055,541 L1065,538 L1075,538 L1082,531 L1095,537 L1110,553 L1120,547 L1140,543 L1160,538 L1170,535 L1190,534 L1200,533 L1210,540 L1220,541 L1225,538 L1230,542 L1230,537 L1055,537Z"/>
<path clip-path="url(#c3cb)" fill="#f0c8b0" d="M1055,541 L1065,538 L1075,538 L1082,531 L1095,537 L1110,553 L1120,547 L1140,543 L1160,538 L1170,535 L1190,534 L1200,533 L1210,540 L1220,541 L1225,538 L1230,542 L1230,548 L1055,548Z"/>
<path fill="none" stroke="#e02020" stroke-width="1.2" d="M1055,541 L1065,538 L1075,538 L1082,531 L1095,537 L1110,553 L1120,547 L1140,543 L1160,538 L1170,535 L1190,534 L1200,533 L1210,540 L1220,541 L1225,538 L1230,542"/>
<rect x="1199" y="527" width="11" height="16" fill="#ffff00"/>
<text x="1262" y="546">0,0</text><text x="1262" y="568">-400,0</text>
<path clip-path="url(#c3mt)" fill="#a8dcd8" d="M1055,589 L1070,586 L1085,590 L1105,600 L1125,597 L1140,597 L1155,600 L1175,593 L1190,586 L1205,589 L1215,593 L1222,589 L1230,595 L1230,596 L1055,596Z"/>
<path clip-path="url(#c3mb)" fill="#ead2c0" d="M1055,589 L1070,586 L1085,590 L1105,600 L1125,597 L1140,597 L1155,600 L1175,593 L1190,586 L1205,589 L1215,593 L1222,589 L1230,595 L1230,596 L1055,596Z"/>
<line x1="1055" y1="596" x2="1230" y2="596" stroke="#888" stroke-dasharray="4,3"/>
<path fill="none" stroke="#333" d="M1055,589 L1070,586 L1085,590 L1105,600 L1125,597 L1140,597 L1155,600 L1175,593 L1190,586 L1205,589 L1215,593 L1222,589 L1230,595"/>
<rect x="1228" y="585" width="10" height="15" fill="#ffff00"/>
<text x="1262" y="599">0,0</text>
<rect x="1055" y="616" width="244" height="18" fill="#161616"/>
<rect x="1258" y="616" width="41" height="18" fill="#333"/>
<path d="M1277,621 h10 M1282,623 v7 M1278,626 l4,4 l4,-4" stroke="#ddd" stroke-width="1.5" fill="none"/>
</g>
</svg>
</body></html>
